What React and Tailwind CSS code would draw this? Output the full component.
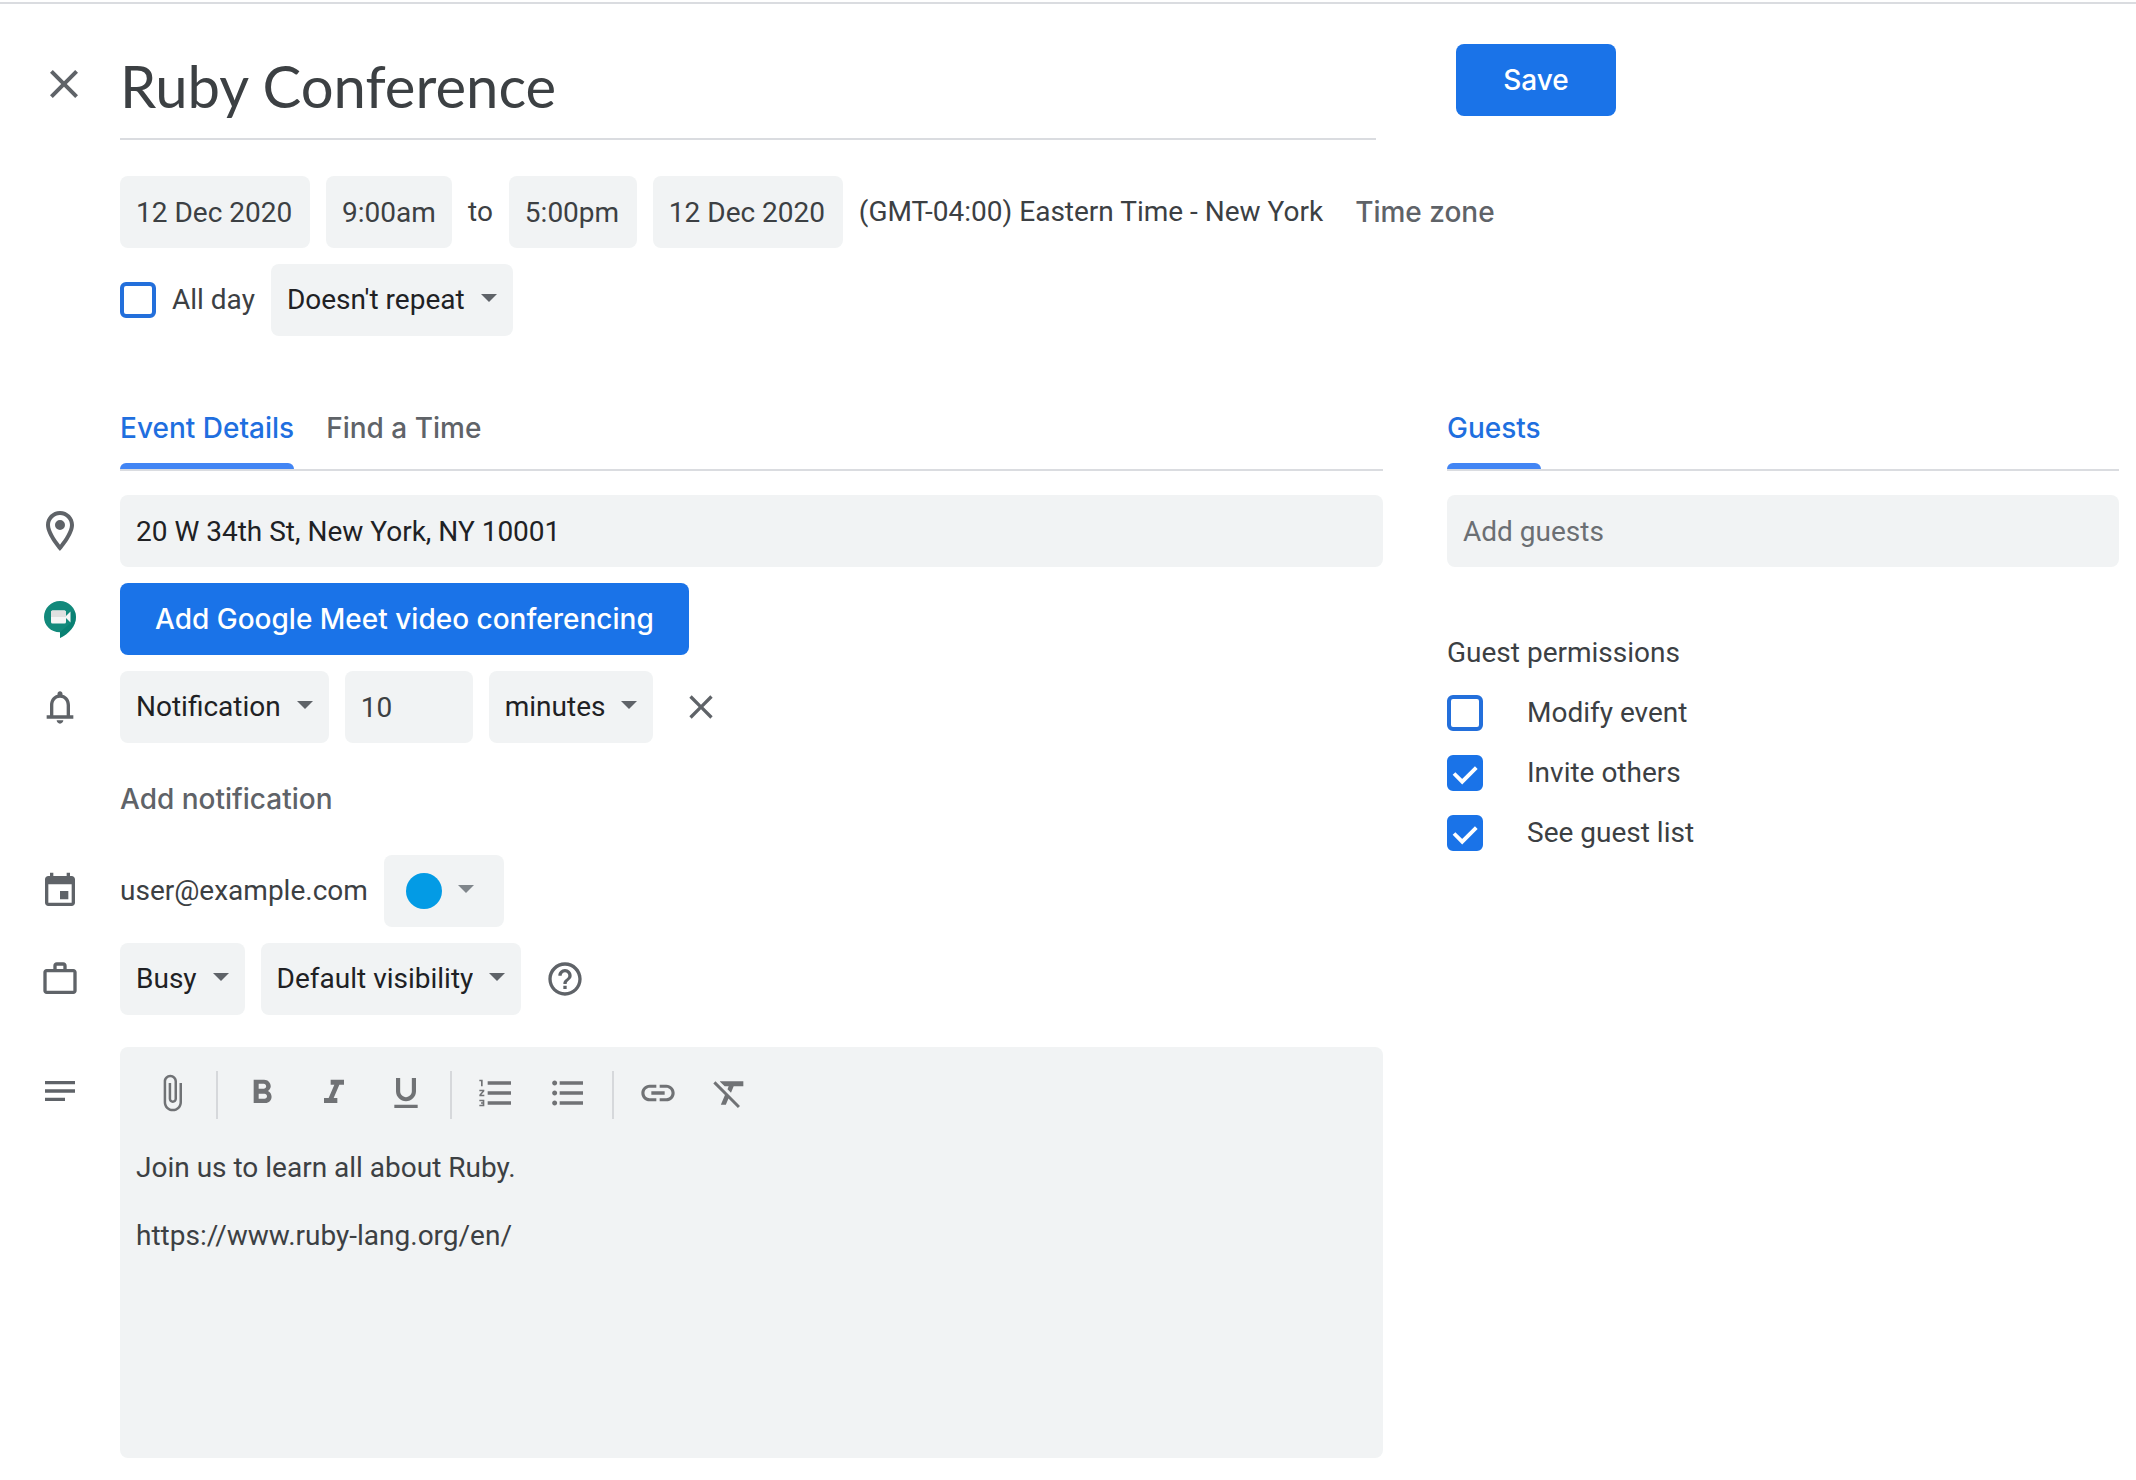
import React from "react";

const ICONS = {
  close:
    "M19 6.41L17.59 5 12 10.59 6.41 5 5 6.41 10.59 12 5 17.59 6.41 19 12 13.41 17.59 19 19 17.59 13.41 12z",
  place:
    "M12 2C8.13 2 5 5.13 5 9c0 5.25 7 13 7 13s7-7.75 7-13c0-3.87-3.13-7-7-7zM7 9c0-2.76 2.24-5 5-5s5 2.24 5 5c0 2.88-2.88 7.19-5 9.88C9.92 16.21 7 11.85 7 9zM12 6.5a2.5 2.5 0 1 0 0 5 2.5 2.5 0 0 0 0-5z",
  bell: "M18 17v-6c0-3.07-1.63-5.64-4.5-6.32V4c0-.83-.67-1.5-1.5-1.5s-1.5.67-1.5 1.5v.68C7.64 5.36 6 7.92 6 11v6H4v2h16v-2h-2zm-2 0H8v-6c0-2.48 1.51-4.5 4-4.5s4 2.02 4 4.5v6zm-4 5c1.1 0 2-.9 2-2h-4c0 1.1.9 2 2 2z",
  event:
    "M17 12h-5v5h5v-5zM16 1v2H8V1H6v2H5c-1.11 0-1.99.9-1.99 2L3 19c0 1.1.89 2 2 2h14c1.1 0 2-.9 2-2V5c0-1.1-.9-2-2-2h-1V1h-2zm3 18H5V8h14v11z",
  work: "M20 6h-4V4c0-1.11-.89-2-2-2h-4c-1.11 0-2 .89-2 2v2H4c-1.11 0-1.99.89-1.99 2L2 19c0 1.11.89 2 2 2h16c1.11 0 2-.89 2-2V8c0-1.11-.89-2-2-2zm-6 0h-4V4h4v2zm6 13H4V8h16v11z",
  notes: "M3 18h12v-2H3v2zM3 6v2h18V6H3zm0 7h18v-2H3v2z",
  help: "M11 18h2v-2h-2v2zm1-16C6.48 2 2 6.48 2 12s4.48 10 10 10 10-4.48 10-10S17.52 2 12 2zm0 18c-4.41 0-8-3.59-8-8s3.59-8 8-8 8 3.59 8 8-3.59 8-8 8zm0-14c-2.21 0-4 1.79-4 4h2c0-1.1.9-2 2-2s2 .9 2 2c0 2-3 1.75-3 5h2c0-2.25 3-2.5 3-5 0-2.21-1.79-4-4-4z",
  attach:
    "M16.5 6v11.5c0 2.21-1.79 4-4 4s-4-1.79-4-4V5c0-1.38 1.12-2.5 2.5-2.5s2.5 1.12 2.5 2.5v10.5c0 .55-.45 1-1 1s-1-.45-1-1V6H10v9.5c0 1.38 1.12 2.5 2.5 2.5s2.5-1.12 2.5-2.5V5c0-2.21-1.79-4-4-4S7 2.79 7 5v12.5c0 3.04 2.46 5.5 5.5 5.5s5.5-2.46 5.5-5.5V6h-1.5z",
  bold: "M15.6 10.79c.97-.67 1.65-1.77 1.65-2.79 0-2.26-1.75-4-4-4H7v14h7.04c2.09 0 3.71-1.7 3.71-3.79 0-1.52-.86-2.82-2.15-3.42zM10 6.5h3c.83 0 1.5.67 1.5 1.5s-.67 1.5-1.5 1.5h-3v-3zm3.5 9H10v-3h3.5c.83 0 1.5.67 1.5 1.5s-.67 1.5-1.5 1.5z",
  italic: "M10 4v3h2.21l-3.42 8H6v3h8v-3h-2.21l3.42-8H18V4z",
  underline:
    "M12 17c3.31 0 6-2.69 6-6V3h-2.5v8c0 1.93-1.57 3.5-3.5 3.5S8.5 12.93 8.5 11V3H6v8c0 3.31 2.69 6 6 6zm-7 2v2h14v-2H5z",
  numbered:
    "M2 17h2v.5H3v1h1v.5H2v1h3v-4H2v1zm1-9h1V4H2v1h1v3zm-1 3h1.8L2 13.1v.9h3v-1H3.2L5 10.9V10H2v1zm5-6v2h14V5H7zm0 14h14v-2H7v2zm0-6h14v-2H7v2z",
  bulleted:
    "M4 10.5c-.83 0-1.5.67-1.5 1.5s.67 1.5 1.5 1.5 1.5-.67 1.5-1.5-.67-1.5-1.5-1.5zm0-6c-.83 0-1.5.67-1.5 1.5S3.17 7.5 4 7.5 5.5 6.83 5.5 6 4.83 4.5 4 4.5zm0 12c-.83 0-1.5.68-1.5 1.5s.68 1.5 1.5 1.5 1.5-.68 1.5-1.5-.67-1.5-1.5-1.5zM7 19h14v-2H7v2zm0-6h14v-2H7v2zm0-8v2h14V5H7z",
  link: "M3.9 12c0-1.71 1.39-3.1 3.1-3.1h4V7H7c-2.76 0-5 2.24-5 5s2.24 5 5 5h4v-1.9H7c-1.71 0-3.1-1.39-3.1-3.1zM8 13h8v-2H8v2zm9-6h-4v1.9h4c1.71 0 3.1 1.39 3.1 3.1s-1.39 3.1-3.1 3.1h-4V17h4c2.76 0 5-2.24 5-5s-2.24-5-5-5z",
  clear:
    "M3.27 5L2 6.27l6.97 6.97L6.5 19h3l1.57-3.66L16.73 21 18 19.73 3.55 5.27 3.27 5zM6 5v.18L8.82 8h2.4l-.72 1.68 2.1 2.1L14.21 8H20V5H6z",
};

function Icon({ name, className = "size-10" }) {
  return (
    <svg viewBox="0 0 24 24" className={className} fill="currentColor" aria-hidden="true">
      <path fillRule="evenodd" d={ICONS[name]} />
    </svg>
  );
}

function MeetIcon() {
  return (
    <svg viewBox="0 0 32 37" className="h-[37px] w-8" aria-hidden="true">
      <path
        d="M16 0C7.2 0 0 7.2 0 16c0 8.6 6.8 15.2 16 15.2V37c9-4.3 16-12 16-21C32 7.2 24.8 0 16 0z"
        fill="#12897b"
      />
      <path d="M26.5 11v11L16 31.2V37c9-4.3 16-12 16-21 0-2-.4-4-1.1-5.5z" fill="#00796b" opacity=".5" />
      <rect x="7" y="9.5" width="15" height="13" rx="1.5" fill="#f5f5f5" />
      <path d="M8.5 9.5h12a1.5 1.5 0 0 1 1.5 1.5v5H7v-5a1.5 1.5 0 0 1 1.5-1.5z" fill="#e0e0e0" />
      <path d="M22 15l4.500-4.500v11L22 17z" fill="#f5f5f5" />
    </svg>
  );
}

function Caret({ className }) {
  return (
    <svg viewBox="0 0 16 12" className={className} fill="currentColor" aria-hidden="true">
      <path d="M0 0h16l-8 8z" />
    </svg>
  );
}

const field = "h-[72px] rounded-lg bg-[#f1f3f4] px-4 outline-none";

function Select({ label, options }) {
  return (
    <div className="relative inline-flex items-center">
      <select
        aria-label={label}
        className="h-[72px] appearance-none rounded-lg bg-[#f1f3f4] pl-4 pr-12 text-[#202124] outline-none field-sizing-content"
      >
        {options.map((o) => (
          <option key={o}>{o}</option>
        ))}
      </select>
      <Caret className="pointer-events-none absolute right-4 h-3 w-4 text-[#5f6368]" />
    </div>
  );
}

function Check({ label, checked = false, gap }) {
  return (
    <label className={`flex items-center ${gap}`}>
      <span className="grid size-9 shrink-0">
        <input
          type="checkbox"
          defaultChecked={checked}
          className="peer col-start-1 row-start-1 size-9 appearance-none rounded-md border-4 border-[#236fdb] checked:border-[#1a73e8] checked:bg-[#1a73e8]"
        />
        <svg
          viewBox="0 0 36 36"
          className="pointer-events-none col-start-1 row-start-1 hidden size-9 peer-checked:block"
          fill="none"
          stroke="#fff"
          strokeWidth="3.8"
          aria-hidden="true"
        >
          <path d="M7 18.500l8.200 8.200L29.300 12.600" />
        </svg>
      </span>
      {label}
    </label>
  );
}

function Row({ icon, children }) {
  return (
    <div className="flex min-h-[72px] items-center">
      <div className="flex w-[120px] shrink-0 justify-center text-[#5f6368]">{icon}</div>
      <div className="flex min-w-0 flex-1 items-center gap-4">{children}</div>
    </div>
  );
}

function Tab({ children, active = false }) {
  return (
    <button
      type="button"
      role="tab"
      aria-selected={active}
      className={
        active
          ? "flex flex-col font-[Inter,sans-serif] font-medium text-[#1f6fdf]"
          : "flex flex-col font-[Inter,sans-serif] font-medium text-[#5f6368]"
      }
    >
      <span className="flex h-[71px] items-center">{children}</span>
      <span className={active ? "h-1.5 w-full rounded-t-md bg-[#4285f4]" : "h-1.5 w-full"} />
    </button>
  );
}

function ToolButton({ name, label }) {
  return (
    <button type="button" aria-label={label} className="flex h-11 w-10 items-center">
      <Icon name={name} />
    </button>
  );
}

function Separator() {
  return <div className="-mx-2 h-12 w-0.5 bg-[#d6d8db]" />;
}

export default function App() {
  return (
    <main className="mt-0.5 border-t-2 border-[#dadce0] bg-white font-[Roboto,sans-serif] text-[28px] leading-[34px] text-[#3c4043]">
      <header className="grid grid-cols-[minmax(0,1376fr)_minmax(0,680fr)] gap-20 pt-10">
        <div className="flex items-start">
          <button
            type="button"
            aria-label="Close"
            className="flex h-20 w-[120px] shrink-0 items-center justify-center pl-2 text-[#5f6368]"
          >
            <Icon name="close" className="size-12" />
          </button>
          <div className="min-w-0 flex-1 border-b-2 border-[#dadce0] pb-3">
            <input
              aria-label="Title"
              defaultValue="Ruby Conference"
              className="block h-[82px] w-full bg-transparent font-[Lato,sans-serif] text-[58px] outline-none"
            />
          </div>
        </div>
        <div>
          <button
            type="button"
            className="h-[72px] w-40 rounded-lg bg-[#1a73e8] font-[Inter,sans-serif] font-medium text-white"
          >
            Save
          </button>
        </div>
      </header>

      <section className="mt-9 flex flex-col gap-4 pl-[120px]">
        <div className="flex flex-wrap items-center gap-4">
          <input aria-label="Start date" defaultValue="12 Dec 2020" className={`${field} w-[190px]`} />
          <input aria-label="Start time" defaultValue="9:00am" className={`${field} w-[126px]`} />
          <span>to</span>
          <input aria-label="End time" defaultValue="5:00pm" className={`${field} w-[128px]`} />
          <input aria-label="End date" defaultValue="12 Dec 2020" className={`${field} w-[190px]`} />
          <span>(GMT-04:00) Eastern Time - New York</span>
          <button type="button" className="ml-4 font-[Inter,sans-serif] font-medium text-[#5f6368]">
            Time zone
          </button>
        </div>
        <div className="flex items-center gap-4">
          <Check label="All day" gap="gap-4" />
          <Select label="Repeat" options={["Doesn't repeat", "Daily"]} />
        </div>
      </section>

      <div className="mt-14 grid grid-cols-[minmax(0,1383fr)_minmax(0,672fr)] gap-16 pr-[17px]">
        <section>
          <div role="tablist" className="ml-[120px] flex gap-8 border-b-2 border-[#dadce0]">
            <Tab active>Event Details</Tab>
            <Tab>Find a Time</Tab>
          </div>
          <div className="mt-6 flex flex-col gap-4">
            <Row icon={<Icon name="place" className="size-12" />}>
              <input
                aria-label="Location"
                defaultValue="20 W 34th St, New York, NY 10001"
                className={`${field} w-full text-[#202124]`}
              />
            </Row>
            <Row icon={<MeetIcon />}>
              <button
                type="button"
                className="h-[72px] rounded-lg bg-[#1a73e8] px-[35px] font-[Inter,sans-serif] font-medium text-white"
              >
                Add Google Meet video conferencing
              </button>
            </Row>
            <Row icon={<Icon name="bell" />}>
              <Select label="Notification type" options={["Notification", "Email"]} />
              <input aria-label="Notification time" defaultValue="10" className={`${field} w-32`} />
              <Select label="Notification unit" options={["minutes", "hours"]} />
              <button
                type="button"
                aria-label="Remove notification"
                className="flex w-16 justify-center text-[#5f6368]"
              >
                <Icon name="close" />
              </button>
            </Row>
            <div className="flex h-20 items-center pl-[120px]">
              <button type="button" className="font-[Inter,sans-serif] font-medium text-[#5f6368]">
                Add notification
              </button>
            </div>
            <Row icon={<Icon name="event" />}>
              <span>user@example.com</span>
              <button
                type="button"
                aria-label="Event colour"
                className="flex h-[72px] w-[120px] items-center gap-4 rounded-lg bg-[#f1f3f4] pl-[22px]"
              >
                <span className="size-9 rounded-full bg-[#039be5]" />
                <Caret className="h-3 w-4 text-[#80868b]" />
              </button>
            </Row>
            <Row icon={<Icon name="work" />}>
              <Select label="Availability" options={["Busy", "Free"]} />
              <Select label="Visibility" options={["Default visibility", "Public"]} />
              <button type="button" aria-label="Help" className="flex w-14 justify-center text-[#5f6368]">
                <Icon name="help" />
              </button>
            </Row>
            <div className="mt-4 flex">
              <div className="flex w-[120px] shrink-0 justify-center pt-6 text-[#5f6368]">
                <Icon name="notes" />
              </div>
              <div className="flex min-h-[411px] min-w-0 flex-1 flex-col rounded-lg bg-[#f1f3f4] pt-6">
                <div role="toolbar" aria-label="Formatting" className="flex gap-8 pl-8 text-[#707275]">
                  <ToolButton name="attach" label="Attach file" />
                  <Separator />
                  <ToolButton name="bold" label="Bold" />
                  <ToolButton name="italic" label="Italic" />
                  <ToolButton name="underline" label="Underline" />
                  <Separator />
                  <ToolButton name="numbered" label="Numbered list" />
                  <ToolButton name="bulleted" label="Bulleted list" />
                  <Separator />
                  <ToolButton name="link" label="Insert link" />
                  <ToolButton name="clear" label="Remove formatting" />
                </div>
                <textarea
                  aria-label="Description"
                  defaultValue={"Join us to learn all about Ruby.\n\nhttps://www.ruby-lang.org/en/"}
                  className="mt-8 w-full flex-1 resize-none bg-transparent px-4 outline-none"
                />
              </div>
            </div>
          </div>
        </section>

        <section>
          <div role="tablist" className="flex border-b-2 border-[#dadce0]">
            <Tab active>Guests</Tab>
          </div>
          <input
            aria-label="Add guests"
            placeholder="Add guests"
            className={`${field} mt-6 block w-full placeholder:text-[#6b6f73]`}
          />
          <fieldset className="mt-14">
            <legend className="h-[60px] leading-[60px]">Guest permissions</legend>
            {[
              ["Modify event", false],
              ["Invite others", true],
              ["See guest list", true],
            ].map(([label, on]) => (
              <div key={label} className="flex h-[60px] items-center">
                <Check label={label} checked={on} gap="gap-11" />
              </div>
            ))}
          </fieldset>
        </section>
      </div>
    </main>
  );
}
